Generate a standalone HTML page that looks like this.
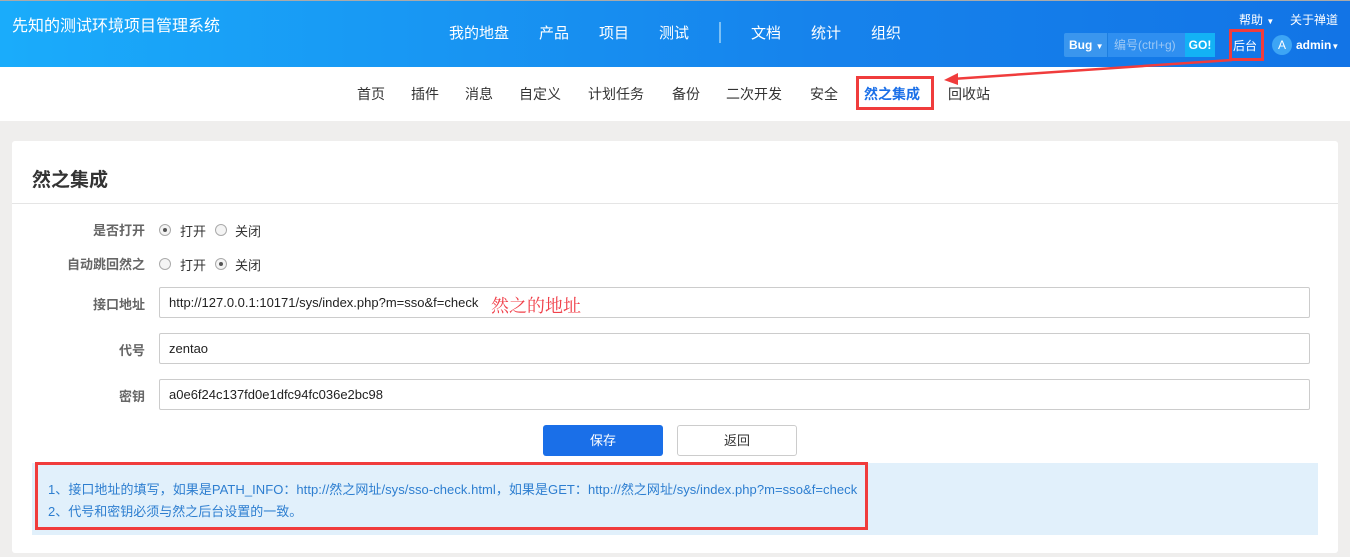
<!DOCTYPE html>
<html><head><meta charset="utf-8"><style>
*{margin:0;padding:0;box-sizing:border-box}
body{width:1350px;height:557px;overflow:hidden;background:#efeeed;font-family:"Liberation Sans","Noto Sans CJK SC",sans-serif;position:relative;color:#333;font-size:13px}
.a{position:absolute;white-space:nowrap}
#hd{position:absolute;left:0;top:0;width:1350px;height:67px;background:linear-gradient(90deg,#1aacfb,#1683ec 60%,#1274e6);border-top:1px solid #aaa}
.w{color:#fff}
#sub{position:absolute;left:0;top:67px;width:1350px;height:54px;background:#fff}
.card{position:absolute;left:12px;top:141px;width:1326px;height:412px;background:#fff;border-radius:3px}
.lbl{color:#666;font-size:13px;font-weight:bold;text-align:right;width:100px}
.inp{position:absolute;left:159px;width:1151px;height:31px;border:1px solid #ccc;border-radius:2px;background:#fff;padding-left:9px;line-height:29px;font-size:13px;color:#222}
.rd{position:absolute;width:12px;height:12px;border:1px solid #aaa;border-radius:50%;background:#f4f4f4}
.rd.on::after{content:"";position:absolute;left:3px;top:3px;width:4px;height:4px;border-radius:50%;background:#555}
.rb{position:absolute;border:3px solid #f03c3c}
.s{top:84px;font-size:14px}
.n{top:22px;font-size:15px}
</style></head><body>
<div id="hd"></div>
<div class="a w" style="left:12px;top:12px;font-size:16px">先知的测试环境项目管理系统</div>
<div class="a w n" style="left:449px">我的地盘</div>
<div class="a w n" style="left:539px">产品</div>
<div class="a w n" style="left:599px">项目</div>
<div class="a w n" style="left:659px">测试</div>
<div class="a" style="left:719px;top:22px;width:2px;height:21px;background:#7cc0f5"></div>
<div class="a w n" style="left:751px">文档</div>
<div class="a w n" style="left:811px">统计</div>
<div class="a w n" style="left:871px">组织</div>
<div class="a w" style="left:1239px;top:11px;font-size:12px">帮助 <span style="font-size:8px">▼</span></div>
<div class="a w" style="left:1290px;top:11px;font-size:12px">关于禅道</div>
<div class="a" style="left:1064px;top:33px;width:43px;height:24px;background:#3a96ee;border-radius:2px 0 0 2px;color:#fff;font-size:12px;font-weight:bold;line-height:24px;padding-left:5px">Bug <span style="font-size:8px">▼</span></div>
<div class="a" style="left:1107px;top:33px;width:78px;height:24px;background:#2f8ff0;border-left:1px solid #1c7ee0;color:#9cc8f5;font-size:12px;line-height:24px;padding-left:6px">编号(ctrl+g)</div>
<div class="a" style="left:1185px;top:33px;width:30px;height:24px;background:#13b2f5;color:#fff;font-size:12px;line-height:24px;text-align:center;font-weight:bold">GO!</div>
<div class="a w" style="left:1233px;top:37px;font-size:12px">后台</div>
<div class="rb" style="left:1229px;top:29px;width:35px;height:32px"></div>
<div class="a" style="left:1272px;top:35px;width:20px;height:20px;border-radius:50%;background:#3da5f5;color:#fff;font-size:12px;text-align:center;line-height:20px">A</div>
<div class="a w" style="left:1296px;top:38px;font-size:12px;font-weight:bold">admin<span style="font-size:8px">▼</span></div>

<div id="sub"></div>
<div class="a s" style="left:357px">首页</div>
<div class="a s" style="left:411px">插件</div>
<div class="a s" style="left:465px">消息</div>
<div class="a s" style="left:519px">自定义</div>
<div class="a s" style="left:588px">计划任务</div>
<div class="a s" style="left:672px">备份</div>
<div class="a s" style="left:726px">二次开发</div>
<div class="a s" style="left:810px">安全</div>
<div class="a s" style="left:864px;color:#1a6fe8;font-weight:bold">然之集成</div>
<div class="a s" style="left:948px">回收站</div>
<div class="rb" style="left:856px;top:76px;width:78px;height:34px"></div>
<svg class="a" style="left:0;top:0" width="1350" height="120"><line x1="1232" y1="60" x2="952" y2="79" stroke="#f03c3c" stroke-width="2.5"/><polygon points="944,80 958,73 958,85" fill="#f03c3c"/></svg>

<div class="card"></div>
<div class="a" style="left:32px;top:165px;font-size:19px;font-weight:bold;color:#333">然之集成</div>
<div class="a" style="left:12px;top:203px;width:1326px;height:1px;background:#e5e5e5"></div>
<div class="a lbl" style="left:45px;top:220px">是否打开</div>
<div class="rd on" style="left:159px;top:224px"></div><div class="a" style="left:180px;top:221px">打开</div>
<div class="rd" style="left:215px;top:224px"></div><div class="a" style="left:235px;top:221px">关闭</div>
<div class="a lbl" style="left:45px;top:254px">自动跳回然之</div>
<div class="rd" style="left:159px;top:258px"></div><div class="a" style="left:180px;top:255px">打开</div>
<div class="rd on" style="left:215px;top:258px"></div><div class="a" style="left:235px;top:255px">关闭</div>
<div class="a lbl" style="left:45px;top:294px">接口地址</div>
<div class="inp" style="top:287px">http://127.0.0.1:10171/sys/index.php?m=sso&amp;f=check</div>
<div class="a" style="left:491px;top:292px;font-size:18px;color:#f0404a;font-family:'Liberation Serif','Noto Serif CJK SC',serif">然之的地址</div>
<div class="a lbl" style="left:45px;top:340px">代号</div>
<div class="inp" style="top:333px">zentao</div>
<div class="a lbl" style="left:45px;top:386px">密钥</div>
<div class="inp" style="top:379px">a0e6f24c137fd0e1dfc94fc036e2bc98</div>
<div class="a" style="left:543px;top:425px;width:120px;height:31px;background:#1a6fe8;border-radius:3px;color:#fff;text-align:center;line-height:31px">保存</div>
<div class="a" style="left:677px;top:425px;width:120px;height:31px;border:1px solid #ccc;border-radius:3px;background:#fff;text-align:center;line-height:29px">返回</div>
<div class="a" style="left:32px;top:463px;width:1286px;height:72px;background:#e1f0fb"></div>
<div class="rb" style="left:35px;top:462px;width:833px;height:68px"></div>
<div class="a" style="left:48px;top:479px;font-size:13px;color:#2d7ed0;letter-spacing:0.05px">1、接口地址的填写，如果是PATH_INFO：http://然之网址/sys/sso-check.html，如果是GET：http://然之网址/sys/index.php?m=sso&amp;f=check</div>
<div class="a" style="left:48px;top:501px;font-size:13px;color:#2d7ed0">2、代号和密钥必须与然之后台设置的一致。</div>
</body></html>
